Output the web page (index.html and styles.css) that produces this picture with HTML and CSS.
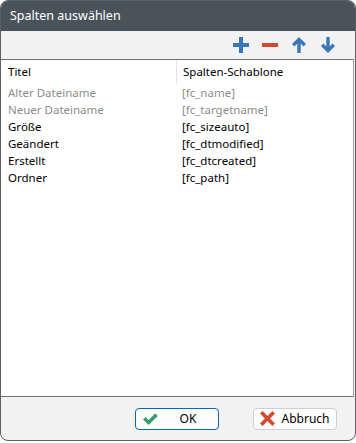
FILE: index.html
```html
<!DOCTYPE html>
<html lang="de">
  <head>
    <meta charset="UTF-8" />
    <meta name="viewport" content="width=device-width, initial-scale=1.0" />
    <title>Spalten auswählen</title>
    <link rel="stylesheet" href="styles.css">
  </head>
  <body>
    <div class="window">
      <div class="titlebar">Spalten auswählen</div>

      <div class="toolbar">
        <button class="tool" title="Hinzufügen">
          <svg width="16" height="16" viewBox="0 0 16 16">
            <path d="M6 0h4v6h6v4h-6v6h-4v-6h-6v-4h6z" fill="#3a77b6" />
          </svg>
        </button>
        <button class="tool" title="Entfernen">
          <svg width="16" height="16" viewBox="0 0 16 16">
            <rect x="0" y="6" width="16" height="4" fill="#d44a30" />
          </svg>
        </button>
        <button class="tool" title="Nach oben">
          <svg width="16" height="16" viewBox="0 0 16 16">
            <path d="M8 0l7 7-2.4 2.4-2.9-2.9v9.5h-3.4v-9.5l-2.9 2.9-2.4-2.4z" fill="#3a77b6" />
          </svg>
        </button>
        <button class="tool" title="Nach unten">
          <svg width="16" height="16" viewBox="0 0 16 16">
            <path d="M8 16l7-7-2.4-2.4-2.9 2.9v-9.5h-3.4v9.5l-2.9-2.9-2.4 2.4z" fill="#3a77b6" />
          </svg>
        </button>
      </div>

      <div class="list">
        <div class="list-head">
          <div class="col col-title">Titel</div>
          <div class="col col-tpl">Spalten-Schablone</div>
        </div>
        <div class="row muted">
          <div class="col col-title">Alter Dateiname</div>
          <div class="col col-tpl">[fc_name]</div>
        </div>
        <div class="row muted">
          <div class="col col-title">Neuer Dateiname</div>
          <div class="col col-tpl">[fc_targetname]</div>
        </div>
        <div class="row">
          <div class="col col-title">Größe</div>
          <div class="col col-tpl">[fc_sizeauto]</div>
        </div>
        <div class="row">
          <div class="col col-title">Geändert</div>
          <div class="col col-tpl">[fc_dtmodified]</div>
        </div>
        <div class="row">
          <div class="col col-title">Erstellt</div>
          <div class="col col-tpl">[fc_dtcreated]</div>
        </div>
        <div class="row">
          <div class="col col-title">Ordner</div>
          <div class="col col-tpl">[fc_path]</div>
        </div>
      </div>

      <div class="footer">
        <button class="btn btn-default">
          <svg width="16" height="14" viewBox="0 0 16 14">
            <path d="M1 7.5l2.6-2.6 3 3 6.6-6.6 2.6 2.6-9.2 9.2z" fill="#3f9a70" />
          </svg>
          <span>OK</span>
        </button>
        <button class="btn">
          <svg width="15" height="15" viewBox="0 0 15 15">
            <path d="M2.6 0l4.9 4.9 4.9-4.9 2.6 2.6-4.9 4.9 4.9 4.9-2.6 2.6-4.9-4.9-4.9 4.9-2.6-2.6 4.9-4.9-4.9-4.9z" fill="#d44a30" />
          </svg>
          <span>Abbruch</span>
        </button>
      </div>
    </div>
  </body>
</html>
```

FILE: styles.css
```css
body {
  margin: 0;
  background: #ffffff;
  font-family: "Noto Sans", "Open Sans", sans-serif;
  font-size: 12px;
}

.window {
  width: 356px;
  height: 441px;
  box-sizing: border-box;
  display: flex;
  flex-direction: column;
  background: #f2f2f2;
  border: 1px solid #5b6066;
  border-radius: 8px;
  overflow: hidden;
}

.titlebar {
  height: 30px;
  background: #4b535a;
  color: #ffffff;
  font-size: 12.5px;
  line-height: 30px;
  padding-left: 9px;
}

.toolbar {
  height: 28px;
  display: flex;
  justify-content: flex-end;
  align-items: center;
  gap: 13px;
  padding-right: 19px;
}

.tool {
  border: none;
  background: none;
  padding: 0;
  width: 16px;
  height: 16px;
  display: flex;
  cursor: pointer;
}

.list {
  flex: 1;
  background: #ffffff;
  border-top: 1px solid #6e6e6e;
  border-bottom: 1px solid #6e6e6e;
  border-right: 1px solid #a0a0a0;
  margin-right: 1px;
  color: #000000;
  font-size: 11.5px;
}

.list-head {
  display: flex;
  height: 24px;
  line-height: 24px;
}

.list-head .col-title {
  border-right: 1px solid #e3e3e3;
}

.row {
  display: flex;
  height: 17px;
  line-height: 17px;
}

.row.muted {
  color: #8c8c8c;
}

.col-title {
  width: 168px;
  padding-left: 7px;
}

.col-tpl {
  padding-left: 6px;
}

.footer {
  height: 43px;
  display: flex;
  justify-content: flex-end;
  align-items: center;
  gap: 34px;
  padding-right: 18px;
}

.btn {
  width: 84px;
  height: 22px;
  box-sizing: border-box;
  display: flex;
  align-items: center;
  padding: 0 0 0 6px;
  background: #fdfdfd;
  border: 1px solid #d0d0d0;
  border-radius: 4px;
  font-family: inherit;
  font-size: 12px;
  color: #000000;
  cursor: pointer;
}

.btn span {
  flex: 1;
  text-align: center;
}

.btn-default {
  border-color: #0067c0;
}
```
